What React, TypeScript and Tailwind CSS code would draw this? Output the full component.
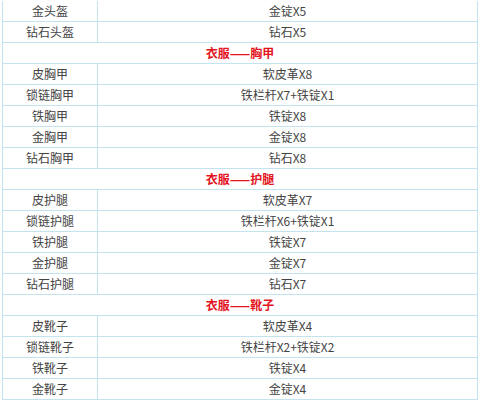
const sections: { title?: string; rows: [string, string][] }[] = [
  { rows: [['金头盔', '金锭X5'], ['钻石头盔', '钻石X5']] },
  {
    title: '衣服——胸甲',
    rows: [
      ['皮胸甲', '软皮革X8'],
      ['锁链胸甲', '铁栏杆X7+铁锭X1'],
      ['铁胸甲', '铁锭X8'],
      ['金胸甲', '金锭X8'],
      ['钻石胸甲', '钻石X8'],
    ],
  },
  {
    title: '衣服——护腿',
    rows: [
      ['皮护腿', '软皮革X7'],
      ['锁链护腿', '铁栏杆X6+铁锭X1'],
      ['铁护腿', '铁锭X7'],
      ['金护腿', '金锭X7'],
      ['钻石护腿', '钻石X7'],
    ],
  },
  {
    title: '衣服——靴子',
    rows: [
      ['皮靴子', '软皮革X4'],
      ['锁链靴子', '铁栏杆X2+铁锭X2'],
      ['铁靴子', '铁锭X4'],
      ['金靴子', '金锭X4'],
    ],
  },
]

export default function App() {
  return (
    <div
      className="w-[480px] h-[401px] overflow-hidden bg-white pt-[1px] pl-[2px]"
      style={{ fontFamily: '"Noto Sans CJK SC", "Noto Sans", sans-serif' }}
    >
      <div className="w-[476px] border-l border-r border-[#c3e4ee] text-[12px] text-[#444]">
        {sections.map((s, i) => (
          <div key={i}>
            {s.title && (
              <div className="h-[21px] border-b border-[#c3e4ee] flex items-center justify-center font-bold text-[#e3141c]">
                {s.title}
              </div>
            )}
            {s.rows.map(([name, cost]) => (
              <div key={name} className="h-[21px] border-b border-[#c3e4ee] flex">
                <div className="w-[95px] border-r border-[#c3e4ee] flex items-center justify-center">{name}</div>
                <div className="flex-1 flex items-center justify-center">{cost}</div>
              </div>
            ))}
          </div>
        ))}
      </div>
    </div>
  )
}
